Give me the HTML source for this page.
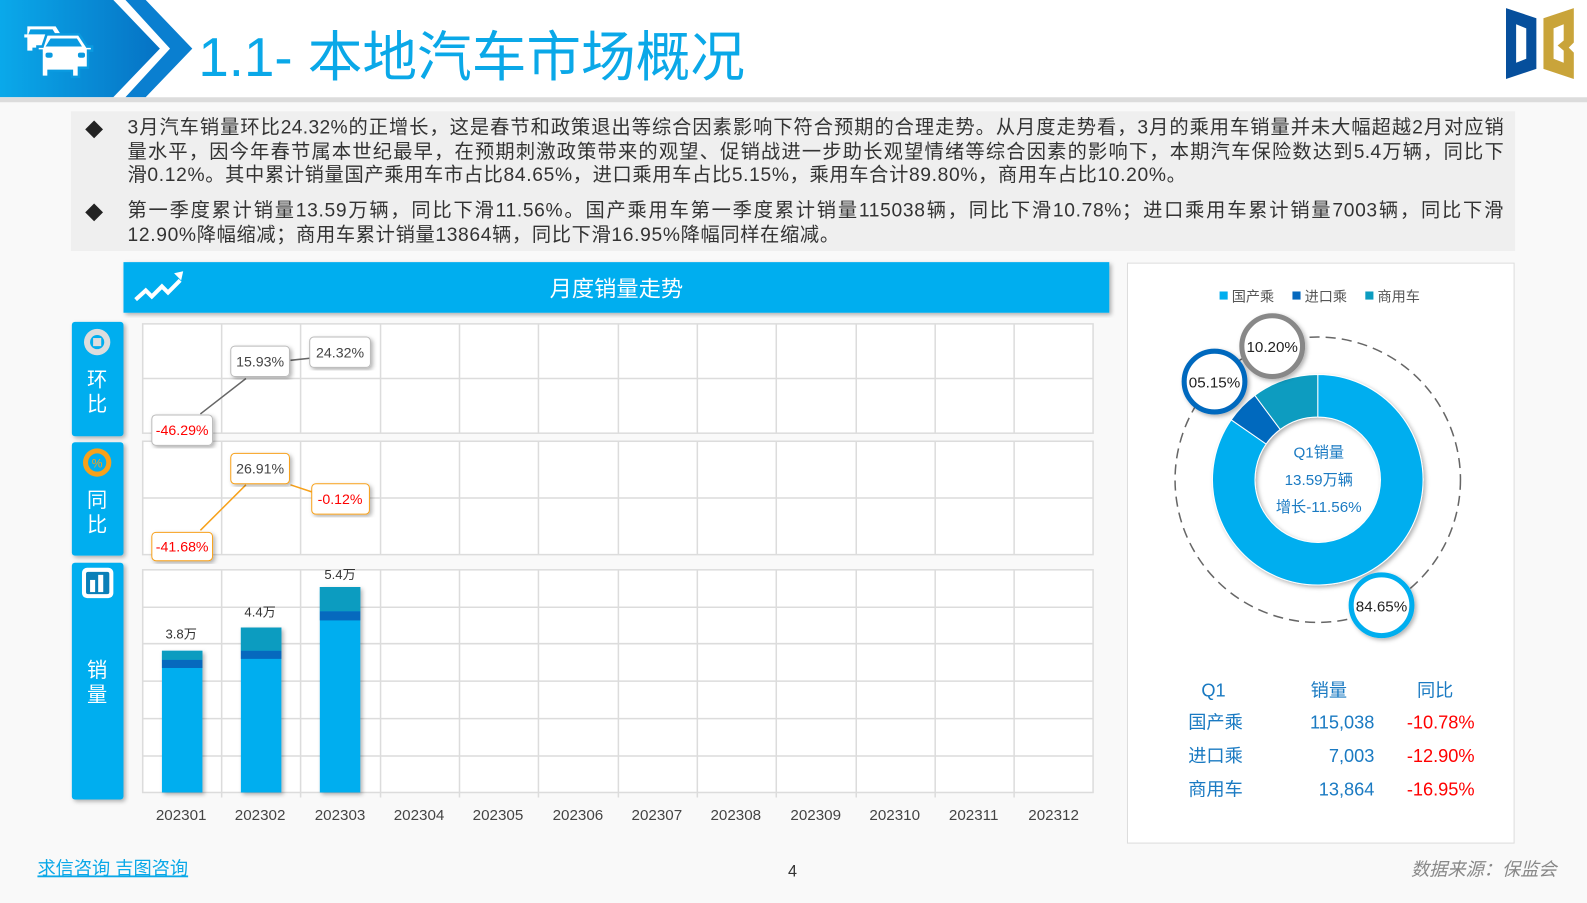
<!DOCTYPE html>
<html><head><meta charset="utf-8"><style>
*{margin:0;padding:0;box-sizing:border-box}
body{width:1587px;height:892px;background:#f9f9f9;font-family:"Liberation Sans","Noto Sans CJK SC",sans-serif;position:relative;overflow:hidden}
#w{position:absolute;left:0;top:0;width:1568px;height:882px;transform:scale(1.0121);transform-origin:0 0}
.abs{position:absolute}
.para{position:absolute;left:126px;width:1360px;font-size:19px;line-height:23.5px;color:#333;text-align:justify;letter-spacing:0.65px}
.para .j{text-align:justify;text-align-last:justify;white-space:nowrap;letter-spacing:0.3px}
.dia{position:absolute;left:84px;font-size:18px;color:#222}
</style></head><body><div id="w">
<div class="abs" style="left:0;top:96px;width:1587px;height:5px;background:#dcdcdc"></div>
<div class="abs" style="left:0;top:0;width:1587px;height:96px;background:#fff"></div>
<svg class="abs" style="left:0;top:0" width="200" height="100">
<defs><linearGradient id="hg" x1="0" x2="1"><stop offset="0" stop-color="#0aa9ea"/><stop offset="1" stop-color="#0672c4"/></linearGradient></defs>
<polygon points="0,0 112,0 158,48 112,96 0,96" fill="url(#hg)"/>
<polygon points="124,0 144,0 190,48 144,96 124,96 168,48" fill="#0a7fd0"/>
<g fill="#fff">
<path d="M27,26 h28 l5,8 h3 v3 h-3 v13 h-5 v-3 h-23 v3 h-5 v-13 h-3 v-3 h3 z M30,29 l-2,5 h27 l-3-5 z"/>
<path d="M46,34 h32 l8,12 h5 v4 h-4 v17 h-9 v9 h-7 v-6 h-23 v6 h-7 v-9 h-0 v-17 h-4 v-4 h5 z" stroke="#0a9ae0" stroke-width="2.5"/>
</g>
<path d="M50,38 h26 l5,8 h-36 z" fill="#0a9ae0"/>
<rect x="45" y="52" width="7" height="5" rx="2" fill="#0a9ae0"/><rect x="77" y="52" width="7" height="5" rx="2" fill="#0a9ae0"/>
</svg>
<div class="abs" style="left:196px;top:22px;font-size:54px;color:#0aa8e8;line-height:70px">1.1- 本地汽车市场概况</div>
<svg class="abs" style="left:1485px;top:4px" width="75" height="78">
<path d="M3,4 l30,10 v50 l-30,10 z M13,20 v38 l10-4 v-30 z" fill="#064f9c" fill-rule="evenodd"/>
<path d="M40,14 l30-10 v34 l-5,5 5,5 v26 l-30-10 z M50,24 v30 l10,4 v-12 l-6-5 6-5 v-16 z" fill="#c9a43a" fill-rule="evenodd"/>
</svg>

<div class="abs" style="left:70px;top:110px;width:1427px;height:138px;background:#efefef"></div>
<div class="dia" style="top:115px">◆</div>
<div class="para" style="top:115px"><div class="j">3月汽车销量环比24.32%的正增长，这是春节和政策退出等综合因素影响下符合预期的合理走势。从月度走势看，3月的乘用车销量并未大幅超越2月对应销</div><div class="j">量水平，因今年春节属本世纪最早，在预期刺激政策带来的观望、促销战进一步助长观望情绪等综合因素的影响下，本期汽车保险数达到5.4万辆，同比下</div><div>滑0.12%。其中累计销量国产乘用车市占比84.65%，进口乘用车占比5.15%，乘用车合计89.80%，商用车占比10.20%。</div></div>
<div class="dia" style="top:197px">◆</div>
<div class="para" style="top:197px">第一季度累计销量13.59万辆，同比下滑11.56%。国产乘用车第一季度累计销量115038辆，同比下滑10.78%；进口乘用车累计销量7003辆，同比下滑12.90%降幅缩减；商用车累计销量13864辆，同比下滑16.95%降幅同样在缩减。</div>

<svg class="abs" style="left:0;top:0" width="1587" height="892" font-family="Liberation Sans, Noto Sans CJK SC, sans-serif">
<defs><filter id="sh"><feDropShadow dx="2" dy="2" stdDeviation="2" flood-opacity="0.3"/></filter></defs>
<rect x="122" y="259" width="974" height="50" fill="#00aeef" filter="url(#sh)"/>
<path d="M134,296 l10-9 6,6 10-10 6,6 12-12" stroke="#fff" stroke-width="4" fill="none"/>
<path d="M172,270 l9-2 -2,9 z" fill="#fff"/>
<text x="609" y="293" font-size="22" fill="#fff" text-anchor="middle">月度销量走势</text>
<rect x="71" y="318" width="51" height="113" rx="3" fill="#00aeef" filter="url(#sh)"/>
<rect x="71" y="437" width="51" height="112" rx="3" fill="#00aeef" filter="url(#sh)"/>
<rect x="71" y="556" width="51" height="234" rx="3" fill="#00aeef" filter="url(#sh)"/>
<circle cx="96" cy="338" r="13" fill="#ddd"/><circle cx="96" cy="338" r="7" fill="#00aeef"/><rect x="92" y="334" width="8" height="8" fill="#ddd"/>
<circle cx="96" cy="457" r="14" fill="#f7a11a"/><circle cx="96" cy="457" r="9" fill="#00aeef"/><text x="96" y="462" font-size="12" fill="#f7a11a" text-anchor="middle">%</text>
<rect x="81" y="561" width="31" height="30" rx="5" fill="#fff"/><rect x="85" y="565" width="23" height="22" rx="2" fill="#0a7fb8"/><rect x="89" y="573" width="5" height="12" fill="#fff"/><rect x="97" y="568" width="5" height="17" fill="#fff"/>
<g font-size="20" fill="#fff" text-anchor="middle"><text x="96" y="382">环</text><text x="96" y="406">比</text><text x="96" y="501">同</text><text x="96" y="525">比</text><text x="96" y="669">销</text><text x="96" y="693">量</text></g>
<g stroke="#dcdcdc" stroke-width="1.5" fill="none">
<rect x="141" y="320" width="939" height="108" fill="#fff"/>
<line x1="141" y1="374" x2="1080" y2="374"/>
<rect x="141" y="436" width="939" height="112" fill="#fff"/>
<line x1="141" y1="492" x2="1080" y2="492"/>
<rect x="141" y="563" width="939" height="220" fill="#fff"/>
<line x1="141" y1="600" x2="1080" y2="600"/><line x1="141" y1="636" x2="1080" y2="636"/><line x1="141" y1="673" x2="1080" y2="673"/><line x1="141" y1="710" x2="1080" y2="710"/><line x1="141" y1="747" x2="1080" y2="747"/>
<path d="M219,320v108M297,320v108M376,320v108M454,320v108M532,320v108M611,320v108M689,320v108M767,320v108M846,320v108M924,320v108M1002,320v108"/>
<path d="M219,436v112M297,436v112M376,436v112M454,436v112M532,436v112M611,436v112M689,436v112M767,436v112M846,436v112M924,436v112M1002,436v112"/>
<path d="M219,563v225M297,563v225M376,563v225M454,563v225M532,563v225M611,563v225M689,563v225M767,563v225M846,563v225M924,563v225M1002,563v225"/>
</g>
<path d="M198,409 L243,374 M287,356 L306,354" stroke="#666" stroke-width="1.5"/>
<path d="M198,524 L243,479 M287,479 L308,486" stroke="#f7a11a" stroke-width="1.5"/>
<g font-size="14" text-anchor="middle">
<rect x="150" y="410" width="60" height="30" rx="4" fill="#fff" stroke="#bbb" filter="url(#sh)"/><text x="180" y="430" fill="#f00">-46.29%</text>
<rect x="228" y="342" width="58" height="30" rx="4" fill="#fff" stroke="#bbb" filter="url(#sh)"/><text x="257" y="362" fill="#444">15.93%</text>
<rect x="306" y="333" width="60" height="30" rx="4" fill="#fff" stroke="#bbb" filter="url(#sh)"/><text x="336" y="353" fill="#444">24.32%</text>
<rect x="150" y="526" width="60" height="28" rx="4" fill="#fff" stroke="#f7a11a" filter="url(#sh)"/><text x="180" y="545" fill="#f00">-41.68%</text>
<rect x="228" y="448" width="58" height="30" rx="4" fill="#fff" stroke="#f7a11a" filter="url(#sh)"/><text x="257" y="468" fill="#444">26.91%</text>
<rect x="308" y="478" width="57" height="30" rx="4" fill="#fff" stroke="#f7a11a" filter="url(#sh)"/><text x="336" y="498" fill="#f00">-0.12%</text>
</g>
<g filter="url(#sh)">
<rect x="160" y="643" width="40" height="140" fill="#00aeef"/>
<rect x="238" y="620" width="40" height="163" fill="#00aeef"/>
<rect x="316" y="580" width="40" height="203" fill="#00aeef"/>
</g>
<rect x="160" y="643" width="40" height="9" fill="#0c9cc0"/><rect x="160" y="652" width="40" height="8" fill="#0669be"/>
<rect x="238" y="620" width="40" height="23" fill="#0c9cc0"/><rect x="238" y="643" width="40" height="8" fill="#0669be"/>
<rect x="316" y="580" width="40" height="24" fill="#0c9cc0"/><rect x="316" y="604" width="40" height="9" fill="#0669be"/>
<g font-size="13" fill="#333" text-anchor="middle"><text x="179" y="631">3.8万</text><text x="257" y="609">4.4万</text><text x="336" y="572">5.4万</text></g>
<g font-size="15" fill="#444" text-anchor="middle">
<text x="179" y="810">202301</text><text x="257" y="810">202302</text><text x="336" y="810">202303</text><text x="414" y="810">202304</text><text x="492" y="810">202305</text><text x="571" y="810">202306</text><text x="649" y="810">202307</text><text x="727" y="810">202308</text><text x="806" y="810">202309</text><text x="884" y="810">202310</text><text x="962" y="810">202311</text><text x="1041" y="810">202312</text>
</g>
<rect x="1114" y="260" width="382" height="573" fill="#fff" stroke="#ddd"/>
<g font-size="14" fill="#555"><rect x="1205" y="288" width="8" height="8" fill="#00aeef"/><text x="1217" y="298">国产乘</text>
<rect x="1277" y="288" width="8" height="8" fill="#0669be"/><text x="1289" y="298">进口乘</text>
<rect x="1349" y="288" width="8" height="8" fill="#0c9cc0"/><text x="1361" y="298">商用车</text></g>
<circle cx="1302" cy="474" r="141" fill="none" stroke="#666" stroke-width="1.5" stroke-dasharray="10,6"/>
<g filter="url(#sh)">
<path d="M1302,370 A104,104 0 1 1 1216.5,414.8 L1251,438.7 A62,62 0 1 0 1302,412 Z" fill="#00aeef" stroke="#fff"/>
<path d="M1216.5,414.8 A104,104 0 0 1 1239.8,390.6 L1264.9,424.3 A62,62 0 0 0 1251,438.7 Z" fill="#0669be" stroke="#fff"/>
<path d="M1239.8,390.6 A104,104 0 0 1 1302,370 L1302,412 A62,62 0 0 0 1264.9,424.3 Z" fill="#0c9cc0" stroke="#fff"/>
</g>
<g font-size="15" fill="#1a7ac2" text-anchor="middle"><text x="1303" y="452">Q1销量</text><text x="1303" y="479">13.59万辆</text><text x="1303" y="506">增长-11.56%</text></g>
<g filter="url(#sh)">
<circle cx="1257" cy="342" r="30" fill="#fff" stroke="#888" stroke-width="5"/>
<circle cx="1200" cy="377" r="30" fill="#fff" stroke="#0669be" stroke-width="5"/>
<circle cx="1365" cy="598" r="30" fill="#fff" stroke="#00aeef" stroke-width="5"/>
</g>
<g font-size="15" fill="#222" text-anchor="middle"><text x="1257" y="348">10.20%</text><text x="1200" y="383">05.15%</text><text x="1365" y="604">84.65%</text></g>
<g font-size="18" fill="#1a7ac2">
<text x="1199" y="688" text-anchor="middle">Q1</text><text x="1313" y="688" text-anchor="middle">销量</text><text x="1418" y="688" text-anchor="middle">同比</text>
<text x="1174" y="720">国产乘</text><text x="1174" y="753">进口乘</text><text x="1174" y="786">商用车</text>
<text x="1358" y="720" text-anchor="end">115,038</text><text x="1358" y="753" text-anchor="end">7,003</text><text x="1358" y="786" text-anchor="end">13,864</text>
</g>
<g font-size="18" fill="#f00"><text x="1390" y="720">-10.78%</text><text x="1390" y="753">-12.90%</text><text x="1390" y="786">-16.95%</text></g>
<text x="37" y="864" font-size="18" fill="#0aa8e8" text-decoration="underline">求信咨询 吉图咨询</text>
<text x="783" y="866" font-size="16" fill="#333" text-anchor="middle">4</text>
<text x="1538" y="865" font-size="18" fill="#888" text-anchor="end" font-style="italic">数据来源：保监会</text>
</svg>
</div></body></html>
